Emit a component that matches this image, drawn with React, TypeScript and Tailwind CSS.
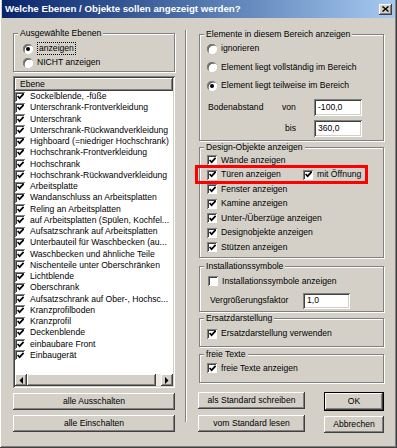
import React from 'react';

const raised =
  'shadow-[inset_-1px_-1px_0_#404040,inset_1px_1px_0_#ffffff,inset_-2px_-2px_0_#808080,inset_2px_2px_0_#d4d0c8]';
const sunken =
  'shadow-[inset_1px_1px_0_#808080,inset_-1px_-1px_0_#ffffff,inset_2px_2px_0_#404040,inset_-2px_-2px_0_#d4d0c8]';

const layers = [
  'Sockelblende, -füße',
  'Unterschrank-Frontverkleidung',
  'Unterschrank',
  'Unterschrank-Rückwandverkleidung',
  'Highboard (=niedriger Hochschrank)',
  'Hochschrank-Frontverkleidung',
  'Hochschrank',
  'Hochschrank-Rückwandverkleidung',
  'Arbeitsplatte',
  'Wandanschluss an Arbeitsplatten',
  'Reling an Arbeitsplatten',
  'auf Arbeitsplatten (Spülen, Kochfel...',
  'Aufsatzschrank auf Arbeitsplatten',
  'Unterbauteil für Waschbecken (au...',
  'Waschbecken und ähnliche Teile',
  'Nischenteile unter Oberschränken',
  'Lichtblende',
  'Oberschrank',
  'Aufsatzschrank auf Ober-, Hochsc...',
  'Kranzprofilboden',
  'Kranzprofil',
  'Deckenblende',
  'einbaubare Front',
  'Einbaugerät',
];

function Tick() {
  return (
    <svg viewBox="0 0 7 7" className="w-[7px] h-[7px]">
      <polyline points="0.6,3 2.6,5.2 6.6,0.9" fill="none" stroke="#000" strokeWidth="1.7" />
    </svg>
  );
}

function Box({ checked }: { checked?: boolean }) {
  return (
    <span
      className={`w-[10px] h-[10px] shrink-0 bg-white flex items-center justify-center ${'shadow-[inset_1px_1px_0_#808080,inset_-1px_-1px_0_#ffffff,inset_2px_2px_0_#404040]'}`}
    >
      {checked && <Tick />}
    </span>
  );
}

function Check({ label, checked = true }: { label: string; checked?: boolean }) {
  return (
    <div className="h-[13px] flex items-center gap-[4px] whitespace-nowrap">
      <Box checked={checked} />
      <span>{label}</span>
    </div>
  );
}

function Radio({ label, checked, focus }: { label: string; checked?: boolean; focus?: boolean }) {
  return (
    <div className="h-[13px] flex items-center gap-[4px] whitespace-nowrap">
      <span className="w-[10px] h-[10px] shrink-0 rounded-full bg-white flex items-center justify-center shadow-[inset_1px_1px_0_#808080,inset_-1px_-1px_0_#ffffff,inset_1.5px_1.5px_0_#404040]">
        {checked && <span className="w-[4px] h-[4px] rounded-full bg-black" />}
      </span>
      <span className={focus ? 'border border-dotted border-black px-px leading-[11px]' : ''}>{label}</span>
    </div>
  );
}

function Group({
  title,
  className,
  children,
}: {
  title: string;
  className: string;
  children: React.ReactNode;
}) {
  return (
    <fieldset
      className={`border border-[#808080] shadow-[1px_1px_0_#ffffff,inset_1px_1px_0_#ffffff] ${className}`}
    >
      <legend className="ml-[4px] px-[2px] leading-[10px] bg-[#d4d0c8]">{title}</legend>
      {children}
    </fieldset>
  );
}

function Btn({ label, className }: { label: string; className: string }) {
  return (
    <div className={`h-[17px] flex items-center justify-center bg-[#d4d0c8] ${raised} ${className}`}>
      {label}
    </div>
  );
}

function Field({ value, className }: { value: string; className: string }) {
  return (
    <div className={`bg-white flex items-center pl-[4px] ${sunken} ${className}`}>{value}</div>
  );
}

function Arrow({ dir }: { dir: 'l' | 'r' }) {
  return (
    <div className={`w-[12px] h-[12px] bg-[#d4d0c8] flex items-center justify-center ${raised}`}>
      <svg viewBox="0 0 4 7" className="w-[4px] h-[7px]">
        {dir === 'l' ? <polygon points="4,0 4,7 0.5,3.5" /> : <polygon points="0,0 0,7 3.5,3.5" />}
      </svg>
    </div>
  );
}

export default function App() {
  return (
    <div className="relative w-[397px] h-[448px] bg-[#d4d0c8] text-black text-[8.6px] font-['Liberation_Sans',Arial,sans-serif] shadow-[inset_-1px_-1px_0_#404040,inset_1px_0_0_#ffffff,inset_-2px_-2px_0_#808080] px-[2px] overflow-hidden">
      {/* title bar */}
      <div className="h-[18px] flex items-center justify-between bg-linear-to-r from-[#0a246a] to-[#a6caf0] pl-[3px] pr-[3px]">
        <span className="text-white font-bold text-[9.7px] whitespace-nowrap">
          Welche Ebenen / Objekte sollen angezeigt werden?
        </span>
        <div className={`w-[13px] h-[11px] bg-[#d4d0c8] flex items-center justify-center ${raised}`}>
          <svg viewBox="0 0 7 6" className="w-[7px] h-[6px]">
            <path d="M0.5 0.5 L6.5 5.5 M6.5 0.5 L0.5 5.5" stroke="#000" strokeWidth="1.4" />
          </svg>
        </div>
      </div>

      <div className="flex pl-[11px]">
        {/* left column */}
        <div className="w-[162px] pt-[10px] flex flex-col">
          <Group title="Ausgewählte Ebenen" className="h-[44px]">
            <div className="pl-[9px] pt-[4px] flex flex-col gap-[1px]">
              <Radio label="anzeigen" checked focus />
              <Radio label="NICHT anzeigen" />
            </div>
          </Group>

          <div className={`mt-[4px] h-[312px] bg-white p-[2px] flex flex-col ${sunken}`}>
            <div className={`h-[13px] shrink-0 flex items-center pl-[5px] bg-[#d4d0c8] ${raised}`}>Ebene</div>
            <div className="flex-1 flex flex-col">
              {layers.map((name) => (
                <div key={name} className="h-[11.25px] flex items-center gap-[5px] whitespace-nowrap overflow-hidden">
                  <Box checked />
                  <span>{name}</span>
                </div>
              ))}
            </div>
            <div className="h-[12px] shrink-0 flex bg-[#ece9e2]">
              <Arrow dir="l" />
              <div className={`w-[129px] h-[12px] bg-[#d4d0c8] ${raised}`} />
              <div className="flex-1" />
              <Arrow dir="r" />
            </div>
          </div>

          <div className="mt-[5px] flex flex-col gap-[5px]">
            <Btn label="alle Ausschalten" className="w-[162px]" />
            <Btn label="alle Einschalten" className="w-[162px]" />
          </div>
        </div>

        {/* separator */}
        <div className="ml-[10px] mt-[12px] w-[2px] h-[392px] border-l border-[#808080] bg-white" />

        {/* right column */}
        <div className="ml-[12px] w-[185px] pt-[11px] flex flex-col">
          <Group title="Elemente in diesem Bereich anzeigen" className="h-[112px]">
            <div className="pl-[7px] pt-[3px] flex flex-col gap-[5.5px]">
              <Radio label="ignorieren" />
              <Radio label="Element liegt vollständig im Bereich" />
              <Radio label="Element liegt teilweise im Bereich" checked />
            </div>
            <div className="mt-[7px] pl-[8px] flex flex-col gap-[4px]">
              <div className="flex items-center h-[17px]">
                <span className="w-[74px]">Bodenabstand</span>
                <span className="w-[32px]">von</span>
                <Field value="-100,0" className="w-[48px] h-[17px]" />
              </div>
              <div className="flex items-center h-[17px]">
                <span className="w-[74px]" />
                <span className="w-[32px] pl-[3px]">bis</span>
                <Field value="360,0" className="w-[48px] h-[17px]" />
              </div>
            </div>
          </Group>

          <Group title="Design-Objekte anzeigen" className="mt-[1px] h-[116px]">
            <div className="pl-[7px] pt-[1.5px] flex flex-col gap-[1.5px]">
              <Check label="Wände anzeigen" />
              <div className="flex items-center">
                <div className="w-[96px]">
                  <Check label="Türen anzeigen" />
                </div>
                <Check label="mit Öffnung" />
              </div>
              <Check label="Fenster anzeigen" />
              <Check label="Kamine anzeigen" />
              <Check label="Unter-/Überzüge anzeigen" />
              <Check label="Designobjekte anzeigen" />
              <Check label="Stützen anzeigen" />
            </div>
          </Group>

          <Group title="Installationssymbole" className="mt-[3px] h-[51px]">
            <div className="pl-[8px] pt-[3.5px]">
              <Check label="Installationssymbole anzeigen" checked={false} />
            </div>
            <div className="mt-[5px] pl-[10px] flex items-center h-[16px]">
              <span className="w-[93px]">Vergrößerungsfaktor</span>
              <Field value="1,0" className="w-[47px] h-[16px]" />
            </div>
          </Group>

          <Group title="Ersatzdarstellung" className="mt-[1px] h-[34px]">
            <div className="pl-[7px] pt-[4px]">
              <Check label="Ersatzdarstellung verwenden" />
            </div>
          </Group>

          <Group title="freie Texte" className="mt-[2px] h-[34px]">
            <div className="pl-[7px] pt-[2.5px]">
              <Check label="freie Texte anzeigen" />
            </div>
          </Group>

          <div className="mt-[9px] -ml-px flex justify-between">
            <div className="flex flex-col gap-[6px]">
              <Btn label="als Standard schreiben" className="w-[107px]" />
              <Btn label="vom Standard lesen" className="w-[107px]" />
            </div>
            <div className="flex flex-col gap-[5px]">
              <div className="border border-black">
                <Btn label="OK" className="w-[58px] h-[15px]" />
              </div>
              <Btn label="Abbrechen" className="w-[60px]" />
            </div>
          </div>
        </div>
      </div>

      {/* highlight annotation */}
      <div className="absolute left-[195px] top-[165px] w-[173px] h-[19px] border-[3px] border-[#ff0000] pointer-events-none" />
    </div>
  );
}
